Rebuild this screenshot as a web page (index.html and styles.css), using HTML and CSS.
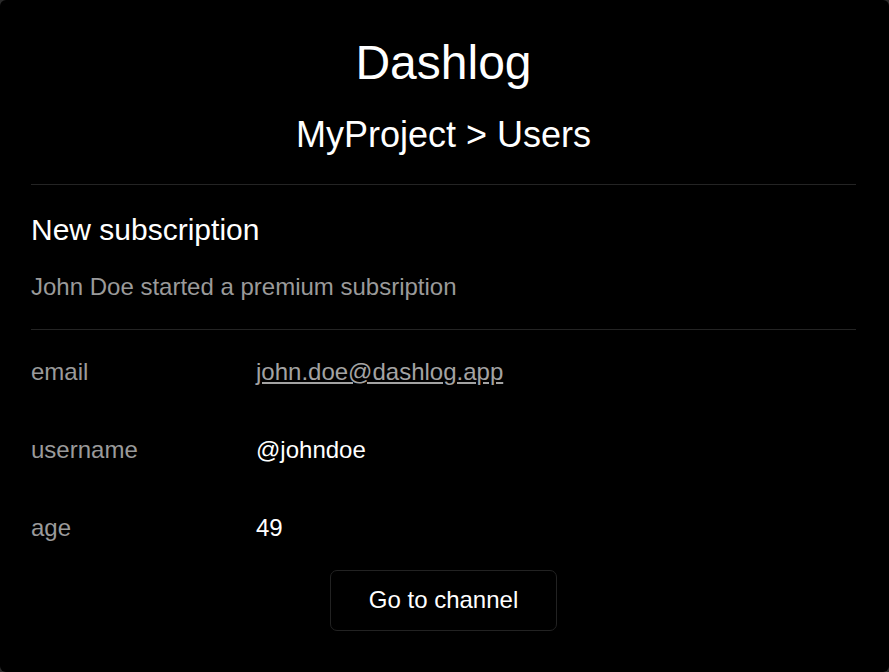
FILE: index.html
```html
<!DOCTYPE html>
<html lang="en">
<head>
<meta charset="utf-8">
<title>Dashlog</title>
<link rel="stylesheet" href="styles.css">
</head>
<body>
<main class="card">
  <header class="head">
    <h1 class="brand">Dashlog</h1>
    <h2 class="crumbs">MyProject &gt; Users</h2>
  </header>
  <hr class="rule">
  <section class="event">
    <h3 class="event-title">New subscription</h3>
    <p class="event-desc">John Doe started a premium subsription</p>
  </section>
  <hr class="rule">
  <dl class="fields">
    <dt class="label">email</dt>
    <dd class="value"><a class="link" href="#">john.doe@dashlog.app</a></dd>
    <dt class="label">username</dt>
    <dd class="value">@johndoe</dd>
    <dt class="label">age</dt>
    <dd class="value">49</dd>
  </dl>
  <div class="actions">
    <a class="button" href="#">Go to channel</a>
  </div>
</main>
</body>
</html>
```

FILE: styles.css
```css
html {
  background: #2a2a2a;
}

body {
  margin: 0;
  font-family: "Liberation Sans", Arial, sans-serif;
  color: #ffffff;
}

.card {
  box-sizing: border-box;
  height: 672px;
  background: #000000;
  border-radius: 6px;
  padding: 35px 33px 0 31px;
  display: flex;
  flex-direction: column;
}

.head {
  text-align: center;
}

.brand {
  margin: 0;
  font-size: 48px;
  line-height: 56px;
  font-weight: 400;
}

.crumbs {
  margin: 22px 0 0;
  font-size: 36px;
  line-height: 44px;
  font-weight: 400;
}

.rule {
  margin: 27px 0 0;
  border: 0;
  height: 1px;
  background: #242424;
}

.event-title {
  margin: 27px 0 0;
  font-size: 30px;
  line-height: 36px;
  font-weight: 400;
}

.event-desc {
  margin: 25px 0 0;
  font-size: 24px;
  line-height: 28px;
  color: #9a9a9a;
}

.event + .rule {
  margin-top: 28px;
}

.fields {
  margin: 28px 0 0;
  display: grid;
  grid-template-columns: 225px 1fr;
  row-gap: 50px;
  font-size: 24px;
  line-height: 28px;
}

.label {
  color: #9a9a9a;
}

.value {
  margin: 0;
  color: #ffffff;
}

.link {
  color: #a3a3a3;
  text-decoration: underline;
}

.actions {
  margin-top: 28px;
  display: flex;
  justify-content: center;
}

.button {
  display: inline-block;
  padding: 15px 38px 16px;
  border: 1px solid #222222;
  border-radius: 7px;
  font-size: 24px;
  line-height: 28px;
  color: #ffffff;
  text-decoration: none;
}
```
